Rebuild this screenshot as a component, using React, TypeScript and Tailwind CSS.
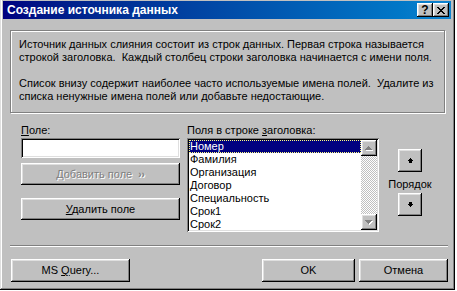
import React from "react";

const raised =
  "shadow-[inset_-1px_-1px_0_#000,inset_1px_1px_0_#fff,inset_-2px_-2px_0_#808080,inset_2px_2px_0_#dfdfdf]";
const sunken =
  "shadow-[inset_1px_1px_0_#808080,inset_-1px_-1px_0_#fff,inset_2px_2px_0_#000,inset_-2px_-2px_0_#dfdfdf]";

function TitleBtn({ children }: { children: React.ReactNode }) {
  return (
    <div
      className={`w-[16px] h-[14px] bg-[#c0c0c0] flex items-center justify-center ${raised}`}
    >
      {children}
    </div>
  );
}

function CloseGlyph() {
  const rows: [number, number][][] = [
    [[0, 2], [6, 2]],
    [[1, 2], [5, 2]],
    [[2, 4]],
    [[3, 2]],
    [[2, 4]],
    [[1, 2], [5, 2]],
    [[0, 2], [6, 2]],
  ];
  return (
    <svg width="8" height="7" viewBox="0 0 8 7" shapeRendering="crispEdges">
      {rows.map((r, y) =>
        r.map(([x, w], i) => <rect key={`${y}-${i}`} x={x} y={y} width={w} height={1} fill="#000" />)
      )}
    </svg>
  );
}

function PixelArrow({ down, color }: { down?: boolean; color: string }) {
  const rows: [number, number][] = [
    [2, 1],
    [1, 3],
    [0, 5],
    [1, 3],
    [1, 3],
  ];
  const r = down ? [...rows].reverse() : rows;
  return (
    <svg width="5" height="5" viewBox="0 0 5 5" shapeRendering="crispEdges">
      {r.map(([x, w], y) => (
        <rect key={y} x={x} y={y} width={w} height={1} fill={color} />
      ))}
    </svg>
  );
}

function DisabledTri({ down }: { down?: boolean }) {
  const rows: [number, number][] = [
    [3, 1],
    [2, 3],
    [1, 5],
    [0, 7],
  ];
  const r = down ? [...rows].reverse() : rows;
  return (
    <svg width="8" height="5" viewBox="0 0 8 5" shapeRendering="crispEdges">
      {r.map(([x, w], y) => (
        <rect key={`w${y}`} x={x + 1} y={y + 1} width={w} height={1} fill="#fff" />
      ))}
      {r.map(([x, w], y) => (
        <rect key={`g${y}`} x={x} y={y} width={w} height={1} fill="#808080" />
      ))}
    </svg>
  );
}

const items = ["Номер", "Фамилия", "Организация", "Договор", "Специальность", "Срок1", "Срок2"];

export default function App() {
  return (
    <div className="w-[457px] h-[291px] bg-white overflow-hidden font-['Liberation_Sans',Arial,sans-serif] text-[11px] leading-[13px] text-black">
      <div className="w-[455px] h-[290px] bg-[#c0c0c0] flex flex-col pl-[3px] pt-[1px] pr-[4px] pb-[3px] shadow-[inset_-1px_-1px_0_#000,inset_1px_0_0_#dfdfdf,inset_-2px_-2px_0_#808080,inset_2px_0_0_#fff]">
        {/* Title bar */}
        <div className="h-[18px] flex items-center bg-linear-to-r from-[#000080] to-[#1084d0] pl-[4px] pr-[2px]">
          <span className="flex-1 text-white font-bold text-[12px] leading-[14px]">
            Создание источника данных
          </span>
          <TitleBtn>
            <span className="font-bold text-[12px] leading-[12px] text-black">?</span>
          </TitleBtn>
          <TitleBtn>
            <CloseGlyph />
          </TitleBtn>
        </div>

        {/* Info group */}
        <div className="ml-[7px] mt-[11px] w-[435px] h-[83px] border border-[#808080] shadow-[inset_1px_1px_0_#fff,1px_1px_0_#fff] pl-[8px] pt-[7px] whitespace-pre">
          {"Источник данных слияния состоит из строк данных. Первая строка называется\nстрокой заголовка.  Каждый столбец строки заголовка начинается с имени поля.\n\nСписок внизу содержит наиболее часто используемые имена полей.  Удалите из\nсписка ненужные имена полей или добавьте недостающие."}
        </div>

        {/* Middle */}
        <div className="mt-[11px] flex items-start">
          {/* Left column */}
          <div className="ml-[18px] w-[159px] flex flex-col">
            <div className="h-[13px]">
              <u>П</u>оле:
            </div>
            <div className={`mt-[1px] h-[20px] bg-white ${sunken}`} />
            <div
              className={`mt-[5px] h-[22px] flex items-center justify-center gap-[6px] text-[#808080] [text-shadow:1px_1px_0_#fff] ${raised}`}
            >
              <span>Добавить поле</span>
              <span className="font-bold text-[10px]">››</span>
            </div>
            <div className={`mt-[13px] h-[22px] flex items-center justify-center ${raised}`}>
              <span>
                <u>У</u>далить поле
              </span>
            </div>
          </div>

          {/* List column */}
          <div className="ml-[7px] flex flex-col">
            <div className="h-[13px]">
              Поля в строке <u>з</u>аголовка:
            </div>
            <div className={`mt-[1px] w-[192px] h-[94px] p-[2px] bg-white ${sunken}`}>
              <div className="w-full h-full flex overflow-hidden">
                <div className="w-[172px] flex flex-col">
                  {items.map((it, i) => (
                    <div
                      key={it}
                      className={
                        i === 0
                          ? "h-[13px] shrink-0 pl-[1px] bg-[#000080] text-white outline outline-1 outline-dotted outline-[#ffff80] -outline-offset-1"
                          : "h-[13px] shrink-0 pl-[1px]"
                      }
                    >
                      {it}
                    </div>
                  ))}
                </div>
                <div className="w-[16px] flex flex-col">
                  <div className={`h-[16px] shrink-0 bg-[#c0c0c0] flex items-center justify-center ${raised}`}>
                    <DisabledTri />
                  </div>
                  <div className="flex-1 bg-[image:repeating-conic-gradient(#c0c0c0_0_25%,#ffffff_0_50%)] bg-[length:2px_2px]" />
                  <div className={`h-[16px] shrink-0 bg-[#c0c0c0] flex items-center justify-center ${raised}`}>
                    <DisabledTri down />
                  </div>
                </div>
              </div>
            </div>
          </div>

          {/* Order column */}
          <div className="ml-[8px] w-[46px] flex flex-col items-center">
            <div className={`mt-[25px] w-[24px] h-[23px] flex items-center justify-center ${raised}`}>
              <PixelArrow color="#000" />
            </div>
            <div className="mt-[6px] h-[13px]">Порядок</div>
            <div className={`mt-[2px] w-[24px] h-[23px] flex items-center justify-center ${raised}`}>
              <PixelArrow down color="#000" />
            </div>
          </div>
        </div>

        {/* Separator */}
        <div className="ml-[7px] mt-[13px] w-[438px] h-px bg-[#808080] shadow-[0_1px_0_#fff]" />

        {/* Bottom buttons */}
        <div className="mt-[13px] flex">
          <div className={`ml-[8px] w-[119px] h-[23px] flex items-center justify-center ${raised}`}>
            <span>
              MS <u>Q</u>uery...
            </span>
          </div>
          <div className={`ml-[132px] w-[93px] h-[23px] flex items-center justify-center ${raised}`}>
            OK
          </div>
          <div className={`ml-[4px] w-[89px] h-[23px] flex items-center justify-center ${raised}`}>
            Отмена
          </div>
        </div>
      </div>
    </div>
  );
}
